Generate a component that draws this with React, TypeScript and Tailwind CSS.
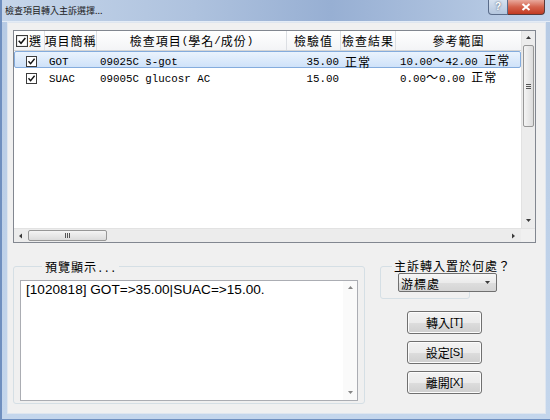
import React from "react";

const cjk = "font-['Noto_Sans_CJK_TC',sans-serif]";
const mono = "font-['Liberation_Mono',monospace]";

// ASCII runs in a narrow mono face, everything else in the CJK face
function Mixed({ s }: { s: string }) {
  const parts = s.match(/[\x00-\x7f]+|[^\x00-\x7f]+/g) ?? [];
  return (
    <>
      {parts.map((p, i) =>
        /^[\x00-\x7f]/.test(p) ? (
          <span key={i} className={`${mono} text-[10.8px] whitespace-pre`}>
            {p}
          </span>
        ) : (
          <span key={i} className={`${cjk} text-[12px] tracking-[1px]`}>
            {p}
          </span>
        )
      )}
    </>
  );
}

function Check({ size = 11 }: { size?: number }) {
  return (
    <svg width={size} height={size} viewBox="0 0 11 11" className="block shrink-0">
      <rect x="0.5" y="0.5" width="10" height="10" fill="#fff" stroke="#3c3c3c" />
      <path d="M2.5 5.2 L4.6 7.6 L8.6 2.8" fill="none" stroke="#111" strokeWidth="1.4" />
    </svg>
  );
}

const cols = "grid grid-cols-[31px_52px_190px_54px_55px_125px]";

const rows = [
  { code: "GOT", item: "09025C s-got", val: "35.00", res: "正常", ref: "10.00～42.00 正常" },
  { code: "SUAC", item: "09005C glucosr AC", val: "15.00", res: "", ref: "0.00～0.00 正常" },
];

function Arrow({ dir }: { dir: "up" | "down" | "left" | "right" }) {
  const d = {
    up: "M1 4 L3.5 1 L6 4 Z",
    down: "M1 1 L3.5 4 L6 1 Z",
    left: "M4 0.5 L1 3 L4 5.5 Z",
    right: "M1 0.5 L4 3 L1 5.5 Z",
  }[dir];
  return (
    <svg width="7" height="6" viewBox="0 0 7 6" className="block">
      <path d={d} fill="#3a3a3a" />
    </svg>
  );
}

function Button({ label, hot }: { label: string; hot: string }) {
  return (
    <div className="w-[75px] h-[23px] rounded-[3px] border border-[#707070] bg-[linear-gradient(#f2f2f2_0%,#ebebeb_50%,#dddddd_51%,#cfcfcf_100%)] flex items-center justify-center shadow-[inset_0_0_0_1px_#fcfcfc]">
      <span className={`${cjk} text-[12px] leading-none`}>{label}</span>
      <span className="font-['Liberation_Sans',sans-serif] text-[11px] leading-none">[{hot}]</span>
    </div>
  );
}

const head = "border-r border-[#dcdfe3] flex items-center justify-center whitespace-nowrap overflow-hidden leading-[16px]";

export default function App() {
  return (
    <div className="w-[550px] h-[420px] flex flex-col bg-[linear-gradient(#b6cae4,#c4d6ec)] border-l-2 border-b border-[#6f8fbf] overflow-hidden">
      {/* title bar */}
      <div className="h-[22px] flex items-start bg-[linear-gradient(90deg,#c6d6ea_0%,#aec2de_35%,#97afd3_60%,#b0c4e0_85%,#c2d3ea_100%)] border-b border-[#e4ecf6]">
        <span className={`${cjk} text-[9px] leading-none mt-[6px] ml-[3px] text-[#1a1a1a]`}>檢查項目轉入主訴選擇...</span>
        <div className="ml-auto mr-[5px] flex">
          <div className="w-[20px] h-[15px] rounded-bl-[4px] border border-t-0 border-[#5a6c8a] bg-[linear-gradient(#d6e1ef,#b4c6de)] flex items-center justify-center">
            <span className="font-['Liberation_Sans',sans-serif] text-[10px] font-bold text-white leading-none [text-shadow:0_0_2px_#33415a]">?</span>
          </div>
          <div className="w-[37px] h-[15px] rounded-br-[4px] border border-l-0 border-t-0 border-[#5a3a3a] bg-[linear-gradient(#e9a99c,#d4624c_50%,#c23a22)] flex items-center justify-center">
            <svg width="10" height="8" viewBox="0 0 10 8">
              <path d="M1.5 1 L8.5 7 M8.5 1 L1.5 7" stroke="#fff" strokeWidth="2" />
            </svg>
          </div>
        </div>
      </div>

      {/* client area */}
      <div className="flex-1 ml-[5px] mr-[4px] mb-[5px] bg-[#f0f0f0] border border-[#dfe6ef] flex flex-col">
        {/* list */}
        <div className="mt-[7px] ml-[5px] w-[523px] h-[213px] border border-[#828790] bg-white flex flex-col">
          <div className="flex h-[197px]">
            <div className="w-[507px] flex flex-col">
              <div className={`${cols} h-[20px] shrink-0 border-b border-[#d5d5d5] bg-[linear-gradient(#ffffff,#f3f4f6)] text-black`}>
                <div className={`${head} gap-[1px]`}>
                  <Check size={12} />
                  <Mixed s="選" />
                </div>
                <div className={head}><Mixed s="項目簡稱" /></div>
                <div className={head}><Mixed s="檢查項目(學名/成份)" /></div>
                <div className={head}><Mixed s="檢驗值" /></div>
                <div className={head}><Mixed s="檢查結果" /></div>
                <div className="flex items-center justify-center whitespace-nowrap leading-[16px]"><Mixed s="參考範圍" /></div>
              </div>
              {rows.map((r, i) => (
                <div
                  key={r.code}
                  className={`${cols} h-[17px] shrink-0 items-center leading-[15px] text-black whitespace-nowrap ${
                    i === 0
                      ? "border border-[#84acdd] rounded-[2px] bg-[linear-gradient(#eaf3fd,#cfe2f9)]"
                      : "border border-transparent"
                  }`}
                >
                  <div className="flex justify-center pl-[2px]"><Check /></div>
                  <div className="pl-[3px]"><Mixed s={r.code} /></div>
                  <div className="pl-[2px]"><Mixed s={r.item} /></div>
                  <div className="text-right pr-[3px]"><Mixed s={r.val} /></div>
                  <div className="pl-[3px]"><Mixed s={r.res} /></div>
                  <div className="pl-[3px]"><Mixed s={r.ref} /></div>
                </div>
              ))}
            </div>
            {/* vertical scrollbar */}
            <div className="w-[14px] flex flex-col bg-[#ececec] border-l border-[#e2e2e2]">
              <div className="h-[14px] flex items-center justify-center"><Arrow dir="up" /></div>
              <div className="h-[82px] mx-[1px] rounded-[2px] border border-[#979797] bg-[linear-gradient(90deg,#f4f4f4,#dcdcdc)] flex flex-col items-center justify-center gap-[1px]">
                <div className="w-[5px] h-px bg-[#555]" />
                <div className="w-[5px] h-px bg-[#555]" />
                <div className="w-[5px] h-px bg-[#555]" />
              </div>
              <div className="flex-1" />
              <div className="h-[14px] flex items-center justify-center"><Arrow dir="down" /></div>
            </div>
          </div>
          {/* horizontal scrollbar */}
          <div className="h-[14px] flex bg-[#ececec] border-t border-[#e2e2e2]">
            <div className="w-[14px] flex items-center justify-center"><Arrow dir="left" /></div>
            <div className="w-[79px] my-[1px] rounded-[2px] border border-[#979797] bg-[linear-gradient(#f4f4f4,#dcdcdc)] flex items-center justify-center gap-[1px]">
              <div className="w-px h-[5px] bg-[#555]" />
              <div className="w-px h-[5px] bg-[#555]" />
              <div className="w-px h-[5px] bg-[#555]" />
            </div>
            <div className="flex-1" />
            <div className="w-[14px] flex items-center justify-center"><Arrow dir="right" /></div>
            <div className="w-[14px] bg-[#f0f0f0]" />
          </div>
        </div>

        {/* bottom section */}
        <div className="flex mt-[23px]">
          {/* preview group */}
          <div className="ml-[5px] w-[352px] h-[138px] border border-[#d5dfe5] rounded-[3px] flex flex-col">
            <div className="-mt-[9px] ml-[28px] px-[3px] w-fit bg-[#f0f0f0] leading-[16px]">
              <Mixed s="預覽顯示..." />
            </div>
            <div className="mt-[3px] ml-[6px] w-[338px] h-[121px] border border-[#abadb3] bg-white flex">
              <div className="flex-1 pl-[5px] pt-0 font-['Liberation_Sans',Arial,sans-serif] text-[13.6px] leading-[18px] text-black">
                [1020818] GOT=&gt;35.00|SUAC=&gt;15.00.
              </div>
              <div className="w-[14px] flex flex-col justify-between bg-[#fafafa]">
                <div className="h-[14px] flex items-center justify-center opacity-60"><Arrow dir="up" /></div>
                <div className="h-[14px] flex items-center justify-center opacity-60"><Arrow dir="down" /></div>
              </div>
            </div>
          </div>

          {/* right column */}
          <div className="ml-[15px] flex flex-col">
            <div className="w-[90px] h-[33px] border border-[#d5dfe5] rounded-[3px]">
              <div className="-mt-[10px] ml-[11px] w-[120px] px-[2px] bg-[#f0f0f0] leading-[16px] whitespace-nowrap">
                <Mixed s="主訴轉入置於何處？" />
              </div>
              <div className="-mt-[1px] ml-[17px] w-[99px] h-[19px] border border-[#707070] rounded-[2px] bg-[linear-gradient(#f6f6f6_0%,#ebebeb_50%,#dedede_51%,#d4d4d4_100%)] flex items-center">
                <span className="pl-[2px] leading-none"><Mixed s="游標處" /></span>
                <span className="ml-auto mr-[5px]"><Arrow dir="down" /></span>
              </div>
            </div>
            <div className="ml-[27px] mt-[12px] flex flex-col gap-[7px]">
              <Button label="轉入" hot="T" />
              <Button label="設定" hot="S" />
              <Button label="離開" hot="X" />
            </div>
          </div>
        </div>
      </div>
    </div>
  );
}
